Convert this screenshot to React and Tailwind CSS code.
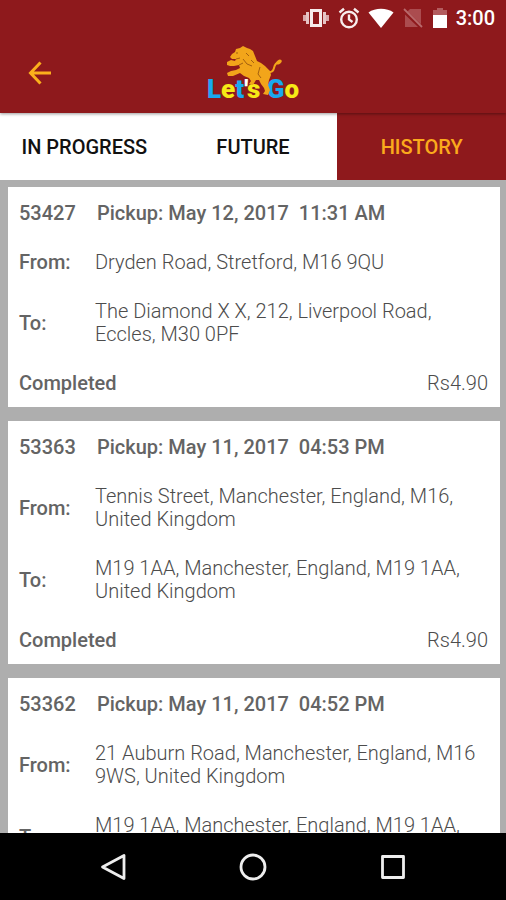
import { useState } from 'react'

const tabs = ['IN PROGRESS', 'FUTURE', 'HISTORY']

const bookings = [
  { id: '53427', date: 'May 12, 2017', time: '11:31 AM', from: 'Dryden Road, Stretford, M16 9QU', to: 'The Diamond X X, 212, Liverpool Road, Eccles, M30 0PF', status: 'Completed', fare: 'Rs4.90' },
  { id: '53363', date: 'May 11, 2017', time: '04:53 PM', from: 'Tennis Street, Manchester, England, M16, United Kingdom', to: 'M19 1AA, Manchester, England, M19 1AA, United Kingdom', status: 'Completed', fare: 'Rs4.90' },
  { id: '53362', date: 'May 11, 2017', time: '04:52 PM', from: '21 Auburn Road, Manchester, England, M16 9WS, United Kingdom', to: 'M19 1AA, Manchester, England, M19 1AA, United Kingdom', status: 'Completed', fare: 'Rs4.90' },
]

function StatusBar() {
  return (
    <div className="flex h-9 items-center justify-end gap-2 pr-[11px] text-white">
      <svg className="h-5 w-7" viewBox="0 0 28 20">
        <path d="M1 7h3v6H1zM24 7h3v6h-3z" fill="#d9a9ab" />
        <path d="M4 4h3v12H4zM21 4h3v12h-3z" fill="#e6c4c5" />
        <path d="M9.500 2.500h9v15h-9z" fill="none" stroke="#f6ebeb" strokeWidth="3" />
      </svg>
      <svg className="h-[22px] w-[22px]" viewBox="0 0 22 22" fill="none" stroke="#f8eeee" strokeWidth="2.4">
        <circle cx="11" cy="12.500" r="7.800" />
        <path d="M1.500 5.500 6 1.800M20.500 5.500 16 1.800M11 7.500v5l3.500 2.500" />
      </svg>
      <svg className="h-5 w-[26px]" viewBox="0 0 26 20" fill="currentColor">
        <path d="M13 20 .5 4.500C7-.5 19-.5 25.500 4.500z" />
      </svg>
      <svg className="h-[22px] w-[22px]" viewBox="0 0 22 22">
        <path d="M8 2h11v18H3V7z" fill="#ab4c4f" />
        <path d="M1 3l19 18" stroke="#8e191c" strokeWidth="4" />
        <path d="M2 2l18 18" stroke="#b86a6c" strokeWidth="1.800" />
      </svg>
      <svg className="h-[22px] w-4" viewBox="0 0 16 22">
        <path d="M5 1h6v2h4v5H1V3h4z" fill="#b35c5e" />
        <path d="M1 8h14v13H1z" fill="#fff" />
      </svg>
      <span className="text-xl font-medium">3:00</span>
    </div>
  )
}

function Logo() {
  return (
    <svg className="h-16 w-24" viewBox="0 0 96 64" role="img" aria-label="Let's Go">
      <text x="2" y="57" fontFamily="Roboto, sans-serif" fontWeight="900" fontSize="26">
        <tspan fill="#19a9f0">L</tspan>
        <tspan fill="#f6e916">e</tspan>
        <tspan fill="#19a9f0">t</tspan>
        <tspan fill="#fff">'</tspan>
        <tspan fill="#f6e916">s</tspan>
        <tspan fill="#19a9f0"> G</tspan>
        <tspan fill="#f6e916">o</tspan>
      </text>
      <g transform="translate(0 4)">
        <path
          d="M38 1 35 3 31 4 30 7 27 9 25 12 27 14 31 14 30 16 26 15 22 17 22 20 25 21 29 21 34 20 35 23 31 25 26 26 22 28 23 31 28 31 35 28 39 31 44 33 46 36 44 39 48 40 51 35 54 35 56 39 59 43 60 46 58 49 63 50 65 45 63 40 64 35 66 30 65 26 60 21 56 18 52 16 50 11 48 6 45 4 42 3z"
          fill="#f2a51a"
        />
        <path d="M63 27Q68 28 69 23T74 17" fill="none" stroke="#f2a51a" strokeWidth="2" />
        <ellipse cx="74" cy="17" rx="3" ry="2" fill="#f2a51a" transform="rotate(-40 74 17)" />
        <path d="M31 8l2 0M31 14l4-1M41 8l3 3M38 14l4 5 5 2M46 15l3 3M34 20l4-2M55 22l-2 7 3 4" fill="none" stroke="#a3600f" strokeWidth="1" />
      </g>
    </svg>
  )
}

function Row({ label, children }) {
  return (
    <div className="flex items-center">
      <dt className="w-[76px] shrink-0 font-medium text-[#646464]">{label}</dt>
      <dd className="flex-1 font-light text-[#4c4c4c]">{children}</dd>
    </div>
  )
}

function BookingCard({ booking }) {
  return (
    <article className="flex flex-col gap-[26px] bg-white pt-[15px] pr-3 pb-3 pl-[11px] text-[20px] leading-[23px]">
      <h2 className="flex font-medium text-[#646464]">
        <span className="w-[78px]">{booking.id}</span>
        <span className="whitespace-pre">Pickup: {booking.date}{'  '}{booking.time}</span>
      </h2>
      <dl className="flex flex-col gap-[26px]">
        <Row label="From:">{booking.from}</Row>
        <Row label="To:">{booking.to}</Row>
      </dl>
      <div className="flex justify-between">
        <span className="font-medium text-[#646464]">{booking.status}</span>
        <span className="font-light text-[#4c4c4c]">{booking.fare}</span>
      </div>
    </article>
  )
}

export default function App() {
  const [active, setActive] = useState('HISTORY')

  return (
    <div className="flex h-screen flex-col bg-[#aeaeae] font-['Roboto',sans-serif]">
      <header className="z-10 shrink-0 bg-[#8e191c] shadow-[0_1px_3px_rgba(0,0,0,0.4)]">
        <StatusBar />
        <div className="grid h-[77px] grid-cols-[1fr_auto_1fr] items-center px-7 pb-[3px]">
          <button type="button" aria-label="Back" className="w-6">
            <svg className="h-6 w-6" viewBox="0 0 24 24" fill="none" stroke="#fbb01c" strokeWidth="3">
              <path d="M12.500 1.500 2.500 12l10 10.500M3 12h20" />
            </svg>
          </button>
          <Logo />
        </div>
      </header>

      {/* Tabs */}
      <nav className="grid h-[67px] shrink-0 grid-cols-3 bg-white">
        {tabs.map(tab => (
          <button
            key={tab}
            type="button"
            onClick={() => setActive(tab)}
            className={`text-[20px] font-medium ${active === tab ? 'bg-[#8e191c] text-[#fbaa1c]' : 'text-[#111]'}`}
          >
            {tab}
          </button>
        ))}
      </nav>

      {/* Bookings */}
      <main className="flex min-h-0 flex-1 flex-col gap-[14px] overflow-hidden pt-[7px] pr-[6px] pl-2">
        {bookings.map(b => <BookingCard key={b.id} booking={b} />)}
      </main>

      {/* System navigation */}
      <footer className="flex h-[67px] shrink-0 items-center justify-center gap-28 bg-black text-[#eee]">
        <button type="button" aria-label="Back">
          <svg className="h-7 w-7" viewBox="0 0 28 28" fill="none" stroke="currentColor" strokeWidth="2.800" strokeLinejoin="round">
            <path d="M25 2.500v23L3.500 14z" />
          </svg>
        </button>
        <button type="button" aria-label="Home">
          <svg className="h-7 w-7" viewBox="0 0 28 28" fill="none" stroke="currentColor" strokeWidth="2.800">
            <circle cx="14" cy="14" r="12" />
          </svg>
        </button>
        <button type="button" aria-label="Recent apps">
          <svg className="h-7 w-7" viewBox="0 0 28 28" fill="none" stroke="currentColor" strokeWidth="2.800" strokeLinejoin="round">
            <path d="M3.500 3.500h21v21h-21z" />
          </svg>
        </button>
      </footer>
    </div>
  )
}
